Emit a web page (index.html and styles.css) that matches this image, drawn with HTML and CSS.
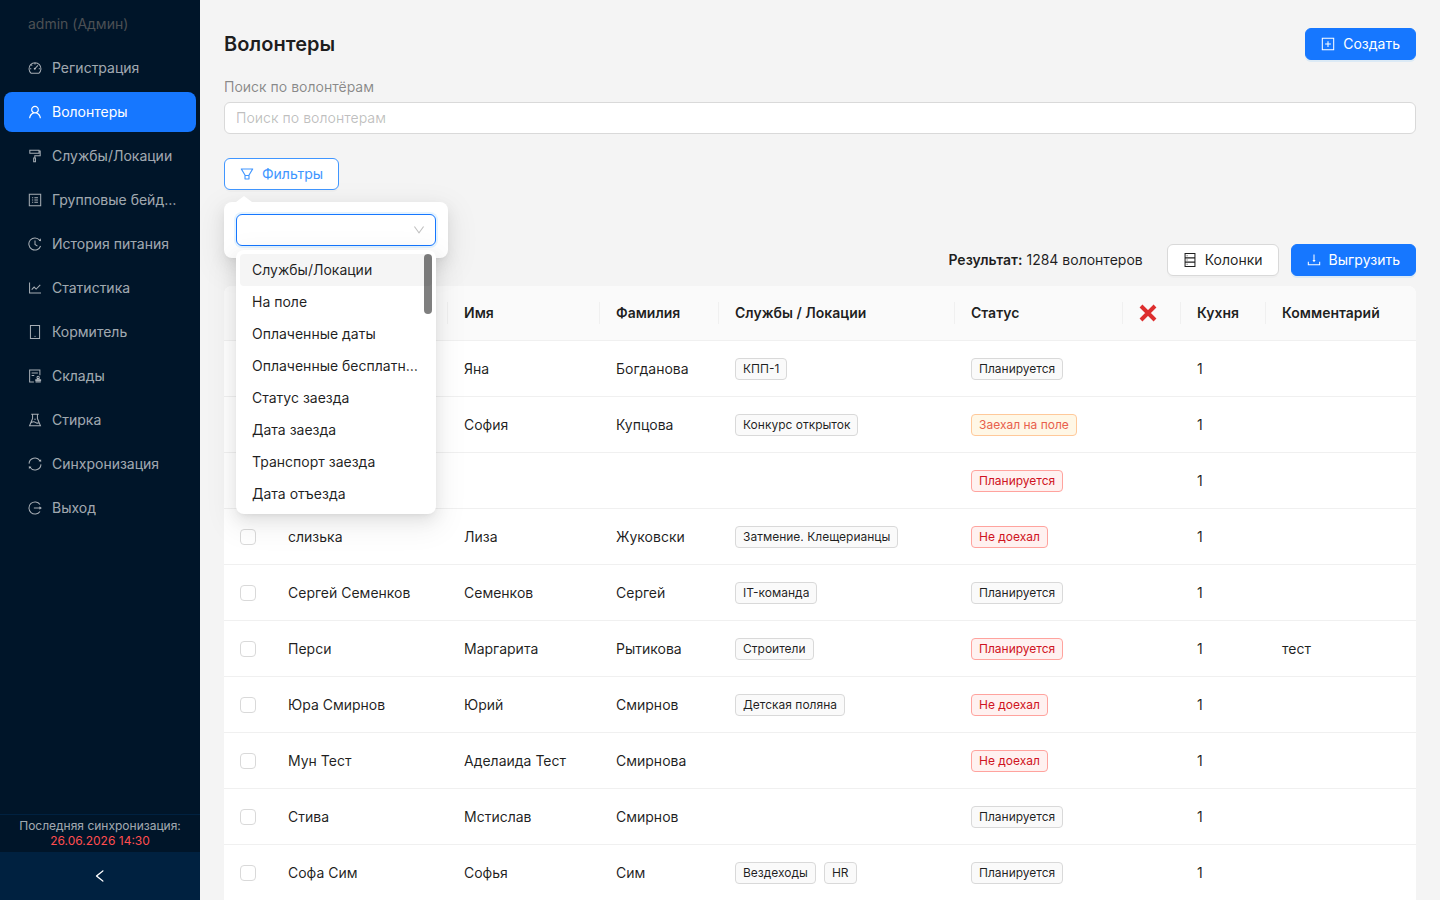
FILE: index.html
```html
<!DOCTYPE html>
<html lang="ru">
<head>
  <meta charset="UTF-8">
  <meta name="viewport" content="width=device-width, initial-scale=1.0">
  <title>Волонтеры</title>
  <link rel="stylesheet" href="styles.css">
</head>
<body>
  <aside class="sider">
    <nav class="menu">
      <div class="menu-item user-name">admin (Админ)</div>
      <a class="menu-item" href="#">
        <svg class="icon line" viewBox="64 64 896 896"><path d="M268 852A384 384 0 1 1 756 852ZM512 210V290M284 314L330 360M196 554H272M752 554H828M500 560L700 350"/><circle cx="496" cy="566" r="30"/></svg>
        <span>Регистрация</span>
      </a>
      <a class="menu-item active" href="#">
        <svg class="icon" viewBox="64 64 896 896"><path d="M858.5 763.6a374 374 0 00-80.6-119.5 375.63 375.63 0 00-119.5-80.6c-.4-.2-.8-.3-1.2-.5C719.5 518 760 444.7 760 362c0-137-111-248-248-248S264 225 264 362c0 82.7 40.5 156 102.8 201.1-.4.2-.8.3-1.2.5-44.8 18.9-85 46-119.5 80.6a375.63 375.63 0 00-80.6 119.5A371.7 371.7 0 00136 901.8a8 8 0 008 8.2h60c4.4 0 7.9-3.5 8-7.8 2-77.2 33-149.5 87.8-204.3 56.7-56.7 132-87.9 212.2-87.9s155.5 31.2 212.2 87.9C779 752.7 810 825 812 902.2c.1 4.4 3.6 7.8 8 7.8h60a8 8 0 008-8.2c-1-47.8-10.9-94.3-29.5-138.2zM512 534c-45.9 0-89.1-17.9-121.6-50.4S340 407.9 340 362c0-45.9 17.9-89.1 50.4-121.6S466.1 190 512 190s89.1 17.9 121.6 50.4S684 316.1 684 362c0 45.9-17.9 89.1-50.4 121.6S557.9 534 512 534z"/></svg>
        <span>Волонтеры</span>
      </a>
      <a class="menu-item" href="#">
        <svg class="icon line" viewBox="64 64 896 896"><path d="M180 148H768V340H180ZM768 196H844V500H500V604M428 640H540V876H428Z"/></svg>
        <span>Службы/Локации</span>
      </a>
      <a class="menu-item" href="#">
        <svg class="icon line" viewBox="64 64 896 896"><path d="M148 148H876V876H148ZM472 364H700M472 512H700M472 660H700M324 364H394M324 512H394M324 660H394"/></svg>
        <span>Групповые бейджи</span>
      </a>
      <a class="menu-item" href="#">
        <svg class="icon line" viewBox="64 64 896 896"><path d="M812 270A388 388 0 1 0 872 640M512 290V536L670 650"/><path class="solid" d="M750 300L900 330L880 150Z"/></svg>
        <span>История питания</span>
      </a>
      <a class="menu-item" href="#">
        <svg class="icon line" viewBox="64 64 896 896"><path d="M164 160V828H896M300 610L456 450L586 580L850 316"/></svg>
        <span>Статистика</span>
      </a>
      <a class="menu-item" href="#">
        <svg class="icon line" viewBox="64 64 896 896"><path d="M220 100H804V924H220Z"/><circle class="solid" cx="512" cy="784" r="40"/></svg>
        <span>Кормитель</span>
      </a>
      <a class="menu-item" href="#">
        <svg class="icon line" viewBox="64 64 896 896"><path d="M440 892H168V132H824V460M296 320H696M296 480H464M548 892H880M560 820V760H870V820ZM650 740L670 660M780 740L760 660"/><circle cx="714" cy="600" r="74"/></svg>
        <span>Склады</span>
      </a>
      <a class="menu-item" href="#">
        <svg class="icon line" viewBox="64 64 896 896"><path d="M270 140H754M356 140V420L164 884H860L668 420V140M250 690C380 600 460 600 540 660S700 730 780 680"/><circle class="solid" cx="512" cy="460" r="44"/></svg>
        <span>Стирка</span>
      </a>
      <a class="menu-item" href="#">
        <svg class="icon line" viewBox="64 64 896 896"><path d="M130 490A382 382 0 0 1 830 304M894 534A382 382 0 0 1 194 720"/><path class="solid" d="M740 330L910 370L900 200ZM284 694L114 654L124 824Z"/></svg>
        <span>Синхронизация</span>
      </a>
      <a class="menu-item" href="#">
        <svg class="icon line" viewBox="64 64 896 896"><path d="M832 290A388 388 0 1 0 832 734M440 512H840"/><path class="solid" d="M800 400L950 512L800 624Z"/></svg>
        <span>Выход</span>
      </a>
    </nav>
    <div class="sync-info">
      Последняя синхронизация:
      <span class="sync-date">26.06.2026 14:30</span>
    </div>
    <button class="collapse-btn" aria-label="Свернуть меню">
      <svg class="icon" viewBox="64 64 896 896"><path d="M724 218.3V141c0-6.7-7.7-10.4-12.9-6.3L260.3 486.8a31.86 31.86 0 000 50.3l450.8 352.1c5.3 4.1 12.9.4 12.9-6.3v-77.3c0-4.9-2.3-9.6-6.1-12.6l-360-281 360-281.1c3.8-3 6.1-7.7 6.1-12.6z"/></svg>
    </button>
  </aside>

  <main class="content">
    <header class="page-header">
      <h1>Волонтеры</h1>
      <button class="btn primary">
        <svg class="icon line" viewBox="64 64 896 896"><path d="M148 148H876V876H148ZM512 328V696M328 512H696"/></svg>
        Создать
      </button>
    </header>

    <div class="search">
      <label for="search">Поиск по волонтёрам</label>
      <input type="text" id="search" placeholder="Поиск по волонтерам">
    </div>

    <div class="filters">
      <button class="btn filter-btn">
        <svg class="icon" viewBox="64 64 896 896"><path d="M880.1 154H143.9c-24.5 0-39.8 26.7-27.5 48L349 597.4V838c0 17.7 14.2 32 31.8 32h262.4c17.6 0 31.8-14.3 31.8-32V597.4L907.7 202c12.2-21.3-3.1-48-27.6-48zM603.4 798H420.6V642h182.9v156zm9.6-236.6l-9.5 16.6h-183l-9.5-16.6L212.7 226h598.6L613 561.4z"/></svg>
        Фильтры
      </button>
      <div class="popover">
        <div class="select-box">
          <select class="filter-select" aria-label="Фильтр">
            <option></option>
            <option>Службы/Локации</option>
            <option>На поле</option>
            <option>Оплаченные даты</option>
          </select>
          <svg class="select-arrow" viewBox="64 64 896 896"><path d="M884 256h-75c-5.1 0-9.9 2.5-12.9 6.6L512 654.2 227.9 262.6c-3-4.1-7.8-6.6-12.9-6.6h-75c-6.5 0-10.3 7.4-6.5 12.7l352.6 486.1c12.8 17.6 39 17.6 51.7 0l352.6-486.1c3.9-5.3.1-12.7-6.4-12.7z"/></svg>
          <ul class="dropdown" role="listbox" aria-label="Фильтр">
            <li class="hovered" role="option">Службы/Локации</li>
            <li role="option">На поле</li>
            <li role="option">Оплаченные даты</li>
            <li role="option">Оплаченные бесплатные</li>
            <li role="option">Статус заезда</li>
            <li role="option">Дата заезда</li>
            <li role="option">Транспорт заезда</li>
            <li role="option">Дата отъезда</li>
          </ul>
        </div>
      </div>
    </div>

    <div class="toolbar">
      <p class="result"><b>Результат:</b> 1284 волонтеров</p>
      <button class="btn">
        <svg class="icon line" viewBox="64 64 896 896"><path d="M196 100H828V924H196ZM196 376H828M196 648H828M300 238H350M300 512H350M300 786H350"/></svg>
        Колонки
      </button>
      <button class="btn primary">
        <svg class="icon line" viewBox="64 64 896 896"><path d="M148 624V820H876V624M512 160V560"/><path class="solid" d="M410 510H614L512 650Z"/></svg>
        Выгрузить
      </button>
    </div>

    <table class="volunteers">
      <colgroup>
        <col class="col-check">
        <col class="col-nick">
        <col class="col-name">
        <col class="col-surname">
        <col class="col-service">
        <col class="col-status">
        <col class="col-ban">
        <col class="col-kitchen">
        <col>
      </colgroup>
      <thead>
        <tr>
          <th class="check"><input type="checkbox" aria-label="Выбрать все"></th>
          <th></th>
          <th>Имя</th>
          <th>Фамилия</th>
          <th>Службы / Локации</th>
          <th>Статус</th>
          <th><svg class="cross" viewBox="1 1 18 18" role="img" aria-label="Заблокирован"><path d="M3 3L17 17M17 3L3 17"/></svg></th>
          <th>Кухня</th>
          <th>Комментарий</th>
        </tr>
      </thead>
      <tbody>
        <tr>
          <td class="check"><input type="checkbox" aria-label="Выбрать"></td>
          <td></td>
          <td>Яна</td>
          <td>Богданова</td>
          <td><span class="tag">КПП-1</span></td>
          <td><span class="tag">Планируется</span></td>
          <td></td>
          <td>1</td>
          <td></td>
        </tr>
        <tr>
          <td class="check"><input type="checkbox" aria-label="Выбрать"></td>
          <td></td>
          <td>София</td>
          <td>Купцова</td>
          <td><span class="tag">Конкурс открыток</span></td>
          <td><span class="tag orange">Заехал на поле</span></td>
          <td></td>
          <td>1</td>
          <td></td>
        </tr>
        <tr>
          <td class="check"><input type="checkbox" aria-label="Выбрать"></td>
          <td></td>
          <td></td>
          <td></td>
          <td></td>
          <td><span class="tag red">Планируется</span></td>
          <td></td>
          <td>1</td>
          <td></td>
        </tr>
        <tr>
          <td class="check"><input type="checkbox" aria-label="Выбрать"></td>
          <td>слизька</td>
          <td>Лиза</td>
          <td>Жуковски</td>
          <td><span class="tag">Затмение. Клещерианцы</span></td>
          <td><span class="tag red">Не доехал</span></td>
          <td></td>
          <td>1</td>
          <td></td>
        </tr>
        <tr>
          <td class="check"><input type="checkbox" aria-label="Выбрать"></td>
          <td>Сергей Семенков</td>
          <td>Семенков</td>
          <td>Сергей</td>
          <td><span class="tag">IT-команда</span></td>
          <td><span class="tag">Планируется</span></td>
          <td></td>
          <td>1</td>
          <td></td>
        </tr>
        <tr>
          <td class="check"><input type="checkbox" aria-label="Выбрать"></td>
          <td>Перси</td>
          <td>Маргарита</td>
          <td>Рытикова</td>
          <td><span class="tag">Строители</span></td>
          <td><span class="tag red">Планируется</span></td>
          <td></td>
          <td>1</td>
          <td>тест</td>
        </tr>
        <tr>
          <td class="check"><input type="checkbox" aria-label="Выбрать"></td>
          <td>Юра Смирнов</td>
          <td>Юрий</td>
          <td>Смирнов</td>
          <td><span class="tag">Детская поляна</span></td>
          <td><span class="tag red">Не доехал</span></td>
          <td></td>
          <td>1</td>
          <td></td>
        </tr>
        <tr>
          <td class="check"><input type="checkbox" aria-label="Выбрать"></td>
          <td>Мун Тест</td>
          <td>Аделаида Тест</td>
          <td>Смирнова</td>
          <td></td>
          <td><span class="tag red">Не доехал</span></td>
          <td></td>
          <td>1</td>
          <td></td>
        </tr>
        <tr>
          <td class="check"><input type="checkbox" aria-label="Выбрать"></td>
          <td>Стива</td>
          <td>Мстислав</td>
          <td>Смирнов</td>
          <td></td>
          <td><span class="tag">Планируется</span></td>
          <td></td>
          <td>1</td>
          <td></td>
        </tr>
        <tr>
          <td class="check"><input type="checkbox" aria-label="Выбрать"></td>
          <td>Софа Сим</td>
          <td>Софья</td>
          <td>Сим</td>
          <td><span class="tag">Вездеходы</span><span class="tag">HR</span></td>
          <td><span class="tag">Планируется</span></td>
          <td></td>
          <td>1</td>
          <td></td>
        </tr>
      </tbody>
    </table>
  </main>
</body>
</html>
```

FILE: styles.css
```css
* {
  box-sizing: border-box;
}

body {
  margin: 0;
  display: flex;
  height: 100vh;
  overflow: hidden;
  background: #f4f4f4;
  color: rgba(0, 0, 0, 0.88);
  font-family: Inter, "Liberation Sans", sans-serif;
  font-size: 14px;
  line-height: 22px;
}

button,
input,
select {
  font: inherit;
}

.icon {
  width: 14px;
  height: 14px;
  flex-shrink: 0;
  fill: currentColor;
}

.icon.line {
  fill: none;
  stroke: currentColor;
  stroke-width: 66;
}

.icon .solid {
  fill: currentColor;
  stroke: none;
}

/* Sidebar */
.sider {
  width: 200px;
  flex-shrink: 0;
  display: flex;
  flex-direction: column;
  background: #001529;
}

.menu {
  flex: 1;
  display: flex;
  flex-direction: column;
  gap: 4px;
  padding: 4px;
}

.menu-item {
  display: flex;
  align-items: center;
  gap: 10px;
  height: 40px;
  padding: 0 16px 0 24px;
  border-radius: 8px;
  color: rgba(255, 255, 255, 0.65);
  text-decoration: none;
}

.menu-item span {
  overflow: hidden;
  text-overflow: ellipsis;
  white-space: nowrap;
}

.menu-item.user-name {
  color: #4c5054;
}

.menu-item.active {
  background: #1677ff;
  color: #fff;
}

.sync-info {
  padding: 3px 0 4px;
  border-top: 1px solid #002140;
  color: rgba(255, 255, 255, 0.65);
  font-size: 12px;
  line-height: 15px;
  text-align: center;
}

.sync-date {
  display: block;
  color: #ff4d4f;
}

.collapse-btn {
  display: flex;
  align-items: center;
  justify-content: center;
  height: 48px;
  border: none;
  background: #002140;
  color: #fff;
  cursor: pointer;
}

/* Content */
.content {
  flex: 1;
  min-width: 0;
  padding: 28px 24px 0;
  overflow: hidden;
}

.page-header {
  display: flex;
  align-items: center;
  justify-content: space-between;
  margin-bottom: 16px;
}

h1 {
  margin: 0;
  font-size: 20px;
  font-weight: 600;
  line-height: 28px;
}

.btn {
  display: flex;
  align-items: center;
  gap: 8px;
  height: 32px;
  padding: 0 15px;
  border: 1px solid #d9d9d9;
  border-radius: 6px;
  background: #fff;
  color: rgba(0, 0, 0, 0.88);
  box-shadow: 0 2px 0 rgba(0, 0, 0, 0.02);
  cursor: pointer;
}

.btn.primary {
  border-color: #1677ff;
  background: #1677ff;
  color: #fff;
  box-shadow: 0 2px 0 rgba(5, 145, 255, 0.1);
}

.btn.filter-btn {
  border-color: #4096ff;
  color: #4096ff;
}

.search {
  display: flex;
  flex-direction: column;
  gap: 4px;
  margin-bottom: 24px;
}

.search label {
  color: rgba(0, 0, 0, 0.45);
}

.search input {
  height: 32px;
  padding: 3px 11px 5px;
  border: 1px solid #d9d9d9;
  border-radius: 6px;
  background: #fff;
}

.search input::placeholder {
  color: rgba(0, 0, 0, 0.25);
}

/* Filters popover */
.filters {
  position: relative;
  display: flex;
  margin-bottom: 54px;
}

.popover {
  position: absolute;
  top: 44px;
  left: 0;
  z-index: 10;
  padding: 12px;
  border-radius: 8px;
  background: #fff;
  box-shadow: 0 6px 16px rgba(0, 0, 0, 0.08), 0 3px 6px -4px rgba(0, 0, 0, 0.12), 0 9px 28px 8px rgba(0, 0, 0, 0.05);
}

.popover::before {
  content: "";
  position: absolute;
  top: -6px;
  left: 12px;
  border: 8px solid transparent;
  border-top: none;
  border-bottom: 6px solid #fff;
}

.select-box {
  position: relative;
}

.filter-select {
  display: block;
  width: 200px;
  height: 32px;
  padding: 0 11px;
  appearance: none;
  border: 1px solid #1677ff;
  border-radius: 6px;
  background: #fff;
  box-shadow: 0 0 0 2px rgba(5, 145, 255, 0.1);
}

.select-arrow {
  position: absolute;
  top: 10px;
  right: 11px;
  width: 12px;
  height: 12px;
  fill: rgba(0, 0, 0, 0.25);
}

.dropdown {
  position: absolute;
  top: 36px;
  left: 0;
  width: 100%;
  margin: 0;
  padding: 4px;
  border-radius: 8px;
  background: #fff;
  box-shadow: 0 6px 16px rgba(0, 0, 0, 0.08), 0 3px 6px -4px rgba(0, 0, 0, 0.12), 0 9px 28px 8px rgba(0, 0, 0, 0.05);
  list-style: none;
}

/* Scrollbar thumb */
.dropdown::after {
  content: "";
  position: absolute;
  top: 4px;
  right: 4px;
  width: 8px;
  height: 60px;
  border-radius: 4px;
  background: rgba(0, 0, 0, 0.5);
}

.dropdown li {
  padding: 5px 12px;
  border-radius: 4px;
  overflow: hidden;
  text-overflow: ellipsis;
  white-space: nowrap;
}

.dropdown li.hovered {
  background: #f5f5f5;
}

/* Table */
.toolbar {
  display: flex;
  align-items: center;
  justify-content: flex-end;
  gap: 12px;
  margin-bottom: 10px;
}

.result {
  margin: 0 12px 0 0;
}

b {
  font-weight: 600;
}

.volunteers {
  width: 100%;
  table-layout: fixed;
  border-collapse: separate;
  border-spacing: 0;
  border-radius: 8px 8px 0 0;
  background: #fff;
}

.col-check { width: 48px; }
.col-nick { width: 176px; }
.col-name { width: 152px; }
.col-surname { width: 119px; }
.col-service { width: 236px; }
.col-status { width: 168px; }
.col-ban { width: 58px; }
.col-kitchen { width: 85px; }

th,
td {
  height: 56px;
  padding: 0 16px;
  border-bottom: 1px solid #f0f0f0;
  text-align: left;
}

th {
  height: 55px;
  background: linear-gradient(#f0f0f0, #f0f0f0) no-repeat right center / 1px 22px #fafafa;
  font-weight: 600;
}

th.check,
th:last-child {
  background: #fafafa;
}

th:first-child {
  border-top-left-radius: 8px;
}

th:last-child {
  border-top-right-radius: 8px;
}

.check input {
  display: block;
  width: 16px;
  height: 16px;
  margin: 0;
  appearance: none;
  border: 1px solid #d9d9d9;
  border-radius: 4px;
  background: #fff;
}

.cross {
  display: block;
  width: 18px;
  height: 18px;
  fill: none;
  stroke: #dd2e2e;
  stroke-width: 4;
}

.tag {
  display: inline-block;
  margin-right: 8px;
  padding: 0 7px;
  border: 1px solid #d9d9d9;
  border-radius: 4px;
  background: #fafafa;
  font-size: 12px;
  line-height: 20px;
  white-space: nowrap;
}

.tag.orange {
  border-color: #ffc99a;
  background: #fff7e6;
  color: #e8604c;
}

.tag.red {
  border-color: #ffa39e;
  background: #fff1f0;
  color: #cf1322;
}
```
